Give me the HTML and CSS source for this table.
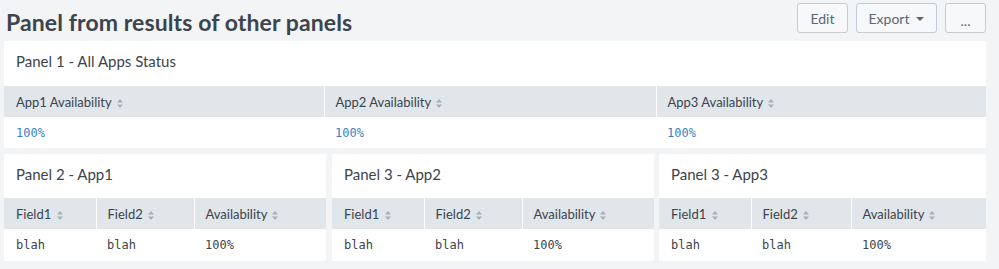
FILE: index.html
```html
<!DOCTYPE html>
<html>
<head>
<meta charset="utf-8">
<link rel="stylesheet" href="styles.css">
</head>
<body>
<div class="topbar">
  <h1 class="title">Panel from results of other panels</h1>
  <div class="actions">
    <button class="btn btn-edit">Edit</button>
    <button class="btn btn-export">Export <span class="caret"></span></button>
    <button class="btn btn-more">...</button>
  </div>
</div>
<div class="dashboard">
  <div class="row">
    <section class="panel panel-full">
      <h2 class="panel-title">Panel 1 - All Apps Status</h2>
      <table class="tbl">
        <colgroup><col class="c1a"><col class="c1b"><col></colgroup>
        <thead><tr>
          <th>App1 Availability <svg class="sort" viewBox="0 0 6 9"><path d="M0 3.5 L3 0 L6 3.5 Z M0 5.5 L3 9 L6 5.5 Z"/></svg></th>
          <th>App2 Availability <svg class="sort" viewBox="0 0 6 9"><path d="M0 3.5 L3 0 L6 3.5 Z M0 5.5 L3 9 L6 5.5 Z"/></svg></th>
          <th>App3 Availability <svg class="sort" viewBox="0 0 6 9"><path d="M0 3.5 L3 0 L6 3.5 Z M0 5.5 L3 9 L6 5.5 Z"/></svg></th>
        </tr></thead>
        <tbody><tr><td class="num">100%</td><td class="num">100%</td><td class="num">100%</td></tr></tbody>
      </table>
    </section>
  </div>
  <div class="row row-3">
    <section class="panel">
      <h2 class="panel-title">Panel 2 - App1</h2>
      <table class="tbl">
        <colgroup><col class="f1"><col class="f2"><col></colgroup>
        <thead><tr>
          <th>Field1 <svg class="sort" viewBox="0 0 6 9"><path d="M0 3.5 L3 0 L6 3.5 Z M0 5.5 L3 9 L6 5.5 Z"/></svg></th>
          <th>Field2 <svg class="sort" viewBox="0 0 6 9"><path d="M0 3.5 L3 0 L6 3.5 Z M0 5.5 L3 9 L6 5.5 Z"/></svg></th>
          <th>Availability <svg class="sort" viewBox="0 0 6 9"><path d="M0 3.5 L3 0 L6 3.5 Z M0 5.5 L3 9 L6 5.5 Z"/></svg></th>
        </tr></thead>
        <tbody><tr><td>blah</td><td>blah</td><td>100%</td></tr></tbody>
      </table>
    </section>
    <section class="panel">
      <h2 class="panel-title">Panel 3 - App2</h2>
      <table class="tbl">
        <colgroup><col class="f1"><col class="f2"><col></colgroup>
        <thead><tr>
          <th>Field1 <svg class="sort" viewBox="0 0 6 9"><path d="M0 3.5 L3 0 L6 3.5 Z M0 5.5 L3 9 L6 5.5 Z"/></svg></th>
          <th>Field2 <svg class="sort" viewBox="0 0 6 9"><path d="M0 3.5 L3 0 L6 3.5 Z M0 5.5 L3 9 L6 5.5 Z"/></svg></th>
          <th>Availability <svg class="sort" viewBox="0 0 6 9"><path d="M0 3.5 L3 0 L6 3.5 Z M0 5.5 L3 9 L6 5.5 Z"/></svg></th>
        </tr></thead>
        <tbody><tr><td>blah</td><td>blah</td><td>100%</td></tr></tbody>
      </table>
    </section>
    <section class="panel panel-wide">
      <h2 class="panel-title">Panel 3 - App3</h2>
      <table class="tbl">
        <colgroup><col class="f1"><col class="f2w"><col></colgroup>
        <thead><tr>
          <th>Field1 <svg class="sort" viewBox="0 0 6 9"><path d="M0 3.5 L3 0 L6 3.5 Z M0 5.5 L3 9 L6 5.5 Z"/></svg></th>
          <th>Field2 <svg class="sort" viewBox="0 0 6 9"><path d="M0 3.5 L3 0 L6 3.5 Z M0 5.5 L3 9 L6 5.5 Z"/></svg></th>
          <th>Availability <svg class="sort" viewBox="0 0 6 9"><path d="M0 3.5 L3 0 L6 3.5 Z M0 5.5 L3 9 L6 5.5 Z"/></svg></th>
        </tr></thead>
        <tbody><tr><td>blah</td><td>blah</td><td>100%</td></tr></tbody>
      </table>
    </section>
  </div>
</div>
</body>
</html>
```
FILE: styles.css
```css
* { box-sizing: border-box; }
body {
  margin: 0;
  background: #f2f4f5;
  font-family: Lato, "Open Sans", "Liberation Sans", sans-serif;
  color: #3c444d;
}
.topbar {
  display: flex;
  justify-content: space-between;
  align-items: flex-start;
  height: 41px;
  padding: 3px 13px 0 6px;
}
.title {
  margin: 5px 0 0;
  font-size: 23px;
  font-weight: 700;
  line-height: 28px;
  color: #3c444d;
  letter-spacing: 0.1px;
}
.actions {
  display: flex;
  gap: 8px;
}
.btn {
  height: 30px;
  border: 1px solid #c3cbd4;
  border-radius: 3px;
  background: #f7f8fa;
  color: #5c6773;
  font-family: Lato, "Open Sans", "Liberation Sans", sans-serif;
  font-size: 14px;
  padding: 0;
  display: flex;
  align-items: center;
  justify-content: center;
}
.btn-edit { width: 51px; }
.btn-export { width: 81px; gap: 7px; }
.btn-more { width: 41px; padding-top: 4px; }
.caret {
  width: 0;
  height: 0;
  border-left: 4px solid transparent;
  border-right: 4px solid transparent;
  border-top: 4px solid #5c6773;
  margin-top: 1px;
}
.dashboard {
  display: flex;
  flex-direction: column;
  gap: 6px;
  padding: 0 13px 0 4px;
}
.row { display: flex; gap: 5px; }
.row-3 .panel { flex: 322 1 0; }
.row-3 .panel:first-child { margin-right: 1px; }
.row-3 .panel-wide { flex: 327 1 0; }
.panel {
  background: #fff;
  flex: 1;
}
.panel-title {
  margin: 0;
  height: 44px;
  padding: 10px 12px 0;
  font-size: 15px;
  font-weight: 400;
  line-height: 20px;
  color: #3c444d;
}
.panel-full .panel-title { height: 45px; }
.tbl {
  width: 100%;
  border-collapse: collapse;
  table-layout: fixed;
}
.c1a { width: 320px; }
.c1b { width: 332px; }
.f1 { width: 92px; }
.f2 { width: 98px; }
.f2w { width: 100px; }
.tbl th {
  background: #e1e6eb;
  height: 31px;
  padding: 0 11px;
  text-align: left;
  font-weight: 400;
  font-size: 13px;
  color: #3c444d;
  border-left: 1px solid #fff;
  white-space: nowrap;
}
.tbl th:first-child { border-left: none; padding-left: 12px; }
.sort {
  width: 6px;
  height: 9px;
  margin-left: 2px;
  fill: #a7afb8;
  vertical-align: -1px;
}
.tbl td {
  height: 31px;
  padding: 0 11px;
  font-family: "DejaVu Sans Mono", "Liberation Mono", monospace;
  font-size: 12px;
  color: #3c444d;
}
.tbl td:first-child { padding-left: 12px; }
.tbl td.num { color: #3e7fc1; }
.row-3 .tbl td { height: 32px; }
```
